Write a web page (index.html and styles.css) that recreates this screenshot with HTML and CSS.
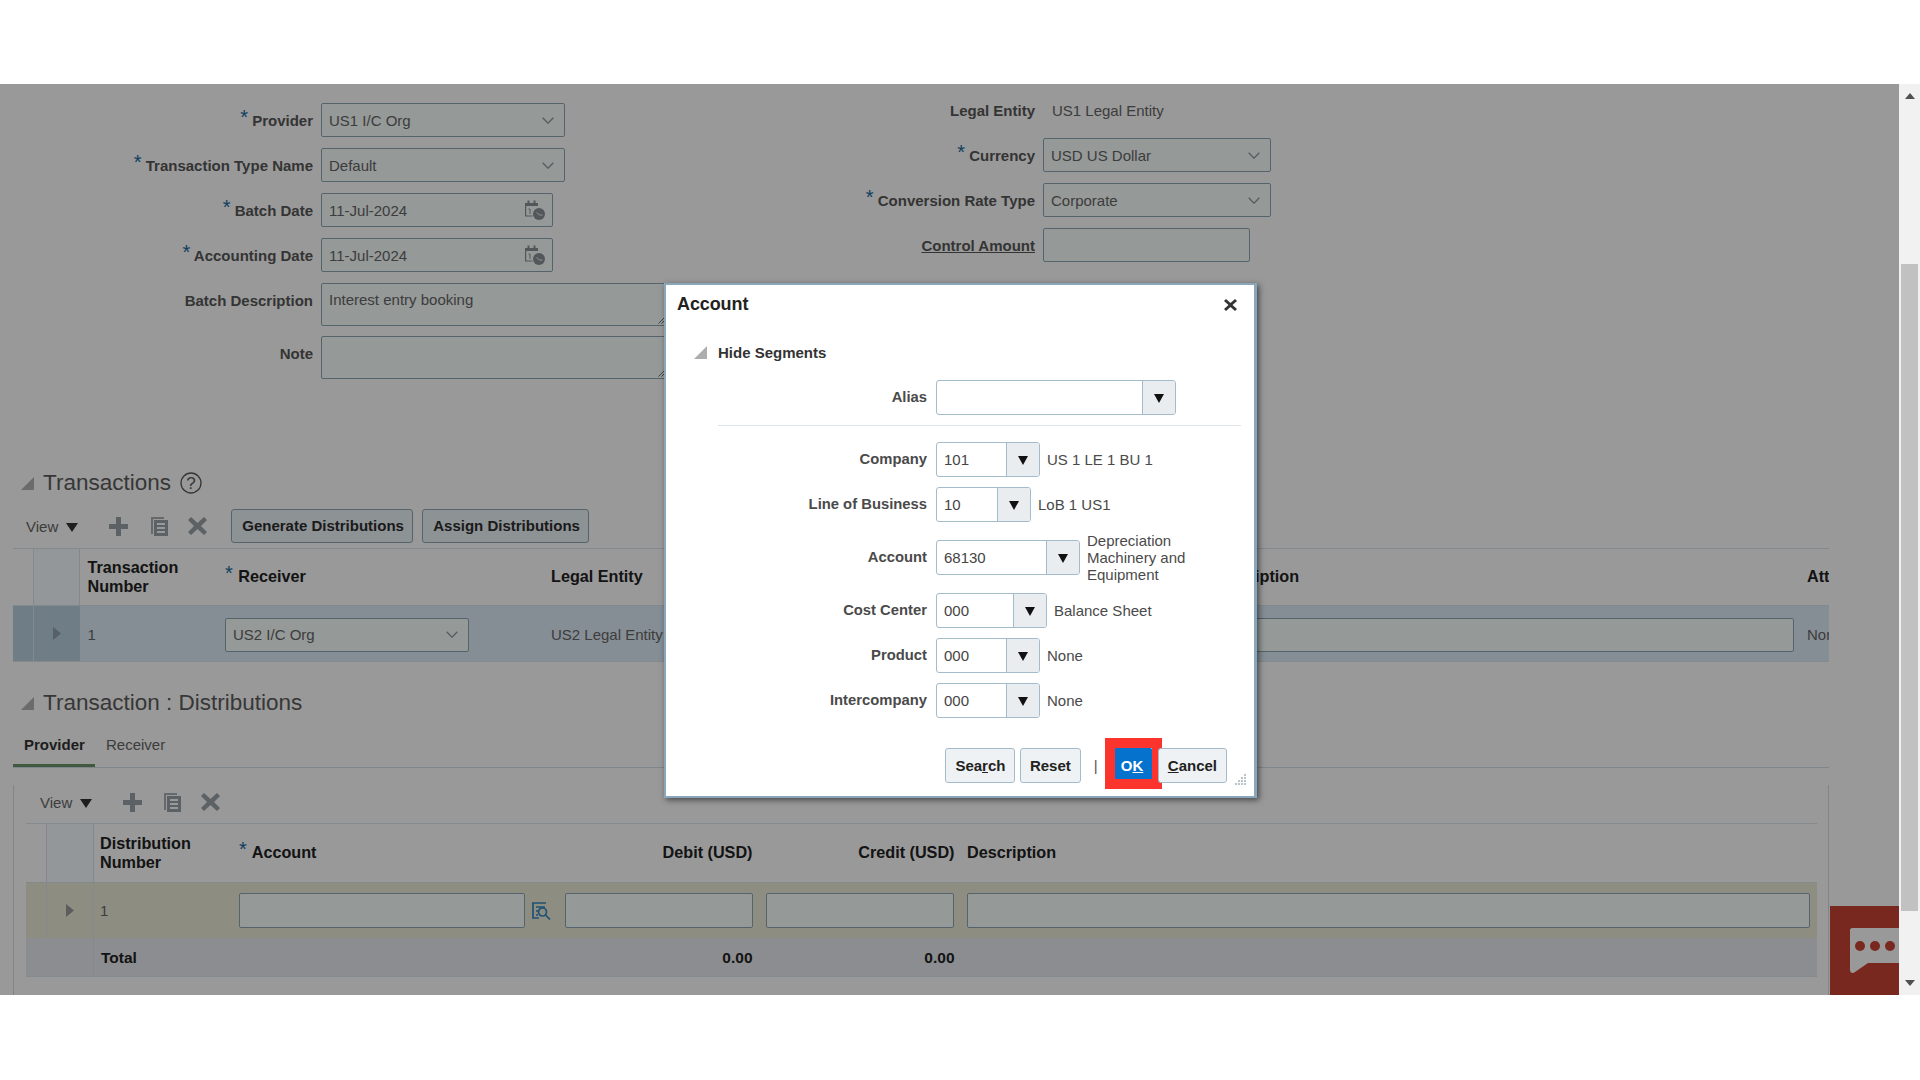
FILE: index.html
```html
<!DOCTYPE html>
<html lang="en">
<head>
<meta charset="utf-8">
<title>Account</title>
<link rel="stylesheet" href="styles.css">
</head>
<body>
<div class="topband"></div>
<div class="app">
  <div class="main">
    <div class="content">
      <div class="form">
        <div class="col-left">
          <div class="row"><label class="lbl"><span class="req">*</span> Provider</label><div class="input w244"><span>US1 I/C Org</span><svg class="chev" viewBox="0 0 12 7"><path d="M.7.7 6 6.2 11.3.7"/></svg></div></div>
          <div class="row"><label class="lbl"><span class="req">*</span> Transaction Type Name</label><div class="input w244"><span>Default</span><svg class="chev" viewBox="0 0 12 7"><path d="M.7.7 6 6.2 11.3.7"/></svg></div></div>
          <div class="row"><label class="lbl"><span class="req">*</span> Batch Date</label><div class="input w232"><span>11-Jul-2024</span><svg class="cal" viewBox="0 0 21 20"><path class="calbody" d="M1.600 4.500V16h7"/><path class="calfill" d="M1 3h13v3H1zM3.500 .5h2v3h-2zM9.500 .5h2v3h-2z"/><circle class="calfill" cx="15" cy="14" r="6"/><path class="calhand" d="M12.500 12.500l3 2.500h3"/><path class="calone" d="M4.500 9h1.500v5"/></svg></div></div>
          <div class="row"><label class="lbl"><span class="req">*</span> Accounting Date</label><div class="input w232"><span>11-Jul-2024</span><svg class="cal" viewBox="0 0 21 20"><path class="calbody" d="M1.600 4.500V16h7"/><path class="calfill" d="M1 3h13v3H1zM3.500 .5h2v3h-2zM9.500 .5h2v3h-2z"/><circle class="calfill" cx="15" cy="14" r="6"/><path class="calhand" d="M12.500 12.500l3 2.500h3"/><path class="calone" d="M4.500 9h1.500v5"/></svg></div></div>
          <div class="row tall"><label class="lbl">Batch Description</label><div class="input area"><span>Interest entry booking</span><svg class="rsz" viewBox="0 0 7 7"><path d="M.5 6.500 6.500.5M3.500 6.500l3-3"/></svg></div></div>
          <div class="row tall"><label class="lbl">Note</label><div class="input area"><svg class="rsz" viewBox="0 0 7 7"><path d="M.5 6.500 6.500.5M3.500 6.500l3-3"/></svg></div></div>
        </div>
        <div class="col-right">
          <div class="row"><label class="lbl r">Legal Entity</label><span class="val">US1 Legal Entity</span></div>
          <div class="row"><label class="lbl r"><span class="req">*</span> Currency</label><div class="input w228"><span>USD US Dollar</span><svg class="chev" viewBox="0 0 12 7"><path d="M.7.7 6 6.2 11.3.7"/></svg></div></div>
          <div class="row"><label class="lbl r"><span class="req">*</span> Conversion Rate Type</label><div class="input w228"><span>Corporate</span><svg class="chev" viewBox="0 0 12 7"><path d="M.7.7 6 6.2 11.3.7"/></svg></div></div>
          <div class="row"><label class="lbl r"><u>Control Amount</u></label><div class="input w207"></div></div>
        </div>
      </div>

      <div class="sechead">
        <svg class="tri" viewBox="0 0 13 13"><path d="M0 13h13V0z"/></svg>
        <h2>Transactions</h2>
        <svg class="help" viewBox="0 0 22 22"><circle cx="11" cy="11" r="10"/><text x="11" y="16.500" text-anchor="middle">?</text></svg>
      </div>
      <div class="wrap">
        <div class="toolbar">
          <span class="view">View</span><span class="vtri"></span>
          <svg class="ic plus" viewBox="0 0 19 19"><path d="M7 0h5v7h7v5h-7v7H7v-7H0V7h7z"/></svg>
          <svg class="ic doc" viewBox="0 0 17 19"><path class="back" d="M0 0h13v2H2v15H0z"/><path fill-rule="evenodd" d="M3 3h14v16H3zM6 6v2h8V6zm0 4v2h8v-2zm0 4v2h8v-2z"/></svg>
          <svg class="ic del" viewBox="0 0 19 18"><path d="M0 3 3 0l6.500 6L16 0l3 3-6 6 6 6-3 3-6.500-6L3 18l-3-3 6-6z"/></svg>
          <button class="tbtn first">Generate Distributions</button>
          <button class="tbtn second">Assign Distributions</button>
        </div>
        <div class="grid g1 head">
          <div class="c edge"></div>
          <div class="c rowh"></div>
          <div class="c">Transaction<br>Number</div>
          <div class="c"><span><span class="req">*</span> Receiver</span></div>
          <div class="c">Legal Entity</div>
          <div class="c">Description</div>
          <div class="c clip">Attachments</div>
        </div>
        <div class="grid g1 sel">
          <div class="c edge dark"></div>
          <div class="c rowh dark"><svg class="arrow" viewBox="0 0 8 13"><path d="M0 0l8 6.500L0 13z"/></svg></div>
          <div class="c val">1</div>
          <div class="c"><div class="input w244"><span>US2 I/C Org</span><svg class="chev" viewBox="0 0 12 7"><path d="M.7.7 6 6.2 11.3.7"/></svg></div></div>
          <div class="c val">US2 Legal Entity</div>
          <div class="c pr5"><div class="input wfill"></div></div>
          <div class="c clip val">None</div>
        </div>

        <div class="sechead second-head">
          <svg class="tri" viewBox="0 0 13 13"><path d="M0 13h13V0z"/></svg>
          <h2>Transaction : Distributions</h2>
        </div>
        <div class="tabs">
          <div class="tab on">Provider</div>
          <div class="tab">Receiver</div>
        </div>
        <div class="panel">
          <div class="toolbar t2">
            <span class="view">View</span><span class="vtri"></span>
            <svg class="ic plus" viewBox="0 0 19 19"><path d="M7 0h5v7h7v5h-7v7H7v-7H0V7h7z"/></svg>
            <svg class="ic doc" viewBox="0 0 17 19"><path class="back" d="M0 0h13v2H2v15H0z"/><path fill-rule="evenodd" d="M3 3h14v16H3zM6 6v2h8V6zm0 4v2h8v-2zm0 4v2h8v-2z"/></svg>
            <svg class="ic del" viewBox="0 0 19 18"><path d="M0 3 3 0l6.500 6L16 0l3 3-6 6 6 6-3 3-6.500-6L3 18l-3-3 6-6z"/></svg>
          </div>
          <div class="grid g2 head">
            <div class="c edge"></div>
            <div class="c rowh"></div>
            <div class="c p6">Distribution<br>Number</div>
            <div class="c"><span><span class="req">*</span> Account</span></div>
            <div class="c right">Debit (USD)</div>
            <div class="c right">Credit (USD)</div>
            <div class="c p5">Description</div>
          </div>
          <div class="grid g2 olive">
            <div class="c edge"></div>
            <div class="c rowh"><svg class="arrow" viewBox="0 0 8 13"><path d="M0 0l8 6.500L0 13z"/></svg></div>
            <div class="c val p6">1</div>
            <div class="c"><div class="input w286"></div>
              <svg class="lookup" viewBox="0 0 19 18"><path d="M0 1h14M1 1v15h6M4 5h9M4 9h2M4 13h2"/><circle cx="10.500" cy="10" r="4"/><path d="M13.500 13l4.500 4.500"/></svg>
            </div>
            <div class="c m6"><div class="input wdebit"></div></div>
            <div class="c m6"><div class="input wdebit"></div></div>
            <div class="c p5"><div class="input wfill"></div></div>
          </div>
          <div class="grid g2 total">
            <div class="c edge"></div>
            <div class="c rowh"></div>
            <div class="c p7">Total</div>
            <div class="c"></div>
            <div class="c right">0.00</div>
            <div class="c right">0.00</div>
            <div class="c"></div>
          </div>
        </div>
      </div>
      <div class="bottomline"></div>
    </div>

    <div class="chat">
      <svg viewBox="0 0 69 89"><path class="bubble" d="M22 22h47v35H38L25 66c-2 2-5 1-5-2V24c0-1 1-2 2-2z"/><circle cx="30" cy="40" r="5"/><circle cx="45" cy="40" r="5"/><circle cx="60" cy="40" r="5"/></svg>
    </div>
    <div class="overlay"></div>

    <div class="dialog">
      <div class="dhead"><span class="dtitle">Account</span><svg class="dclose" viewBox="0 0 13 12"><path d="M0 2 2 0l4.500 4L11 0l2 2-4.500 4L13 10l-2 2-4.500-4L2 12l-2-2 4.500-4z"/></svg></div>
      <div class="disc"><svg class="tri" viewBox="0 0 13 13"><path d="M0 13h13V0z"/></svg><span>Hide Segments</span></div>
      <div class="frow first"><span class="flbl">Alias</span><div class="combo f240"><span></span><i><b></b></i></div></div>
      <div class="sep"></div>
      <div class="frow"><span class="flbl">Company</span><div class="combo f104"><span>101</span><i><b></b></i></div><span class="fdesc">US 1 LE 1 BU 1</span></div>
      <div class="frow"><span class="flbl">Line of Business</span><div class="combo f95"><span>10</span><i><b></b></i></div><span class="fdesc">LoB 1 US1</span></div>
      <div class="frow"><span class="flbl">Account</span><div class="combo f144"><span>68130</span><i><b></b></i></div><span class="fdesc narrow">Depreciation Machinery and Equipment</span></div>
      <div class="frow"><span class="flbl">Cost Center</span><div class="combo f111"><span>000</span><i><b></b></i></div><span class="fdesc">Balance Sheet</span></div>
      <div class="frow"><span class="flbl">Product</span><div class="combo f104"><span>000</span><i><b></b></i></div><span class="fdesc">None</span></div>
      <div class="frow"><span class="flbl">Intercompany</span><div class="combo f104"><span>000</span><i><b></b></i></div><span class="fdesc">None</span></div>
      <div class="actions">
        <button class="dbtn">Sea<u>r</u>ch</button>
        <button class="dbtn">Reset</button>
        <span class="pipe">|</span>
        <button class="dbtn ok">O<u>K</u><span class="mark"></span></button>
        <button class="dbtn"><u>C</u>ancel</button>
      </div>
      <svg class="grip" viewBox="0 0 12 12"><path d="M10 0h2v2h-2zM7 3h2v2H7zM10 3h2v2h-2zM4 6h2v2H4zM7 6h2v2H7zM10 6h2v2h-2zM1 9h2v2H1zM4 9h2v2H4zM7 9h2v2H7zM10 9h2v2h-2z"/></svg>
    </div>
  </div>
  <div class="scrollbar">
    <div class="sbarrow"><svg viewBox="0 0 10 6"><path d="M5 0l5 6H0z"/></svg></div>
    <div class="thumb"></div>
    <div class="sbarrow down"><svg viewBox="0 0 10 6"><path d="M0 0h10L5 6z"/></svg></div>
  </div>
</div>
</body>
</html>
```
FILE: styles.css
```css
* { box-sizing: border-box; }
html, body { margin: 0; padding: 0; }
body {
  width: 1920px; height: 1080px; overflow: hidden; background: #fff;
  font: 15px/17px "Liberation Sans", Arial, sans-serif; color: #666;
}
u { text-decoration: underline; }
.topband { height: 84px; }
.app { display: flex; height: 911px; }
.main { flex: 1; position: relative; overflow: hidden; background: #fff; }
.content { height: 911px; }

/* form */
.form { display: flex; height: 386px; padding-top: 9px; }
.col-left { width: 700px; padding-top: 10px; }
.row { display: flex; align-items: center; height: 34px; margin-bottom: 11px; }
.row.tall { height: 43px; margin-bottom: 10px; align-items: flex-start; }
.row.tall .lbl { line-height: 36px; }
.lbl { width: 313px; margin-right: 8px; text-align: right; font-weight: 700; font-size: 15px; color: #585858; white-space: nowrap; flex: none; }
.lbl.r { width: 335px; }
.req { color: #1a6a9e; font-weight: 400; font-size: 20px; line-height: 0; position: relative; top: -2px; }
.val { color: #666; }
.col-right .val { margin-left: 1px; padding-left: 8px; }
.input {
  display: flex; align-items: center; justify-content: space-between; flex: none;
  height: 34px; padding: 0 10px 0 7px; background: #f8fffd;
  border: 1px solid #8ea7b4; border-radius: 2px; color: #666; white-space: nowrap;
}
.w244 { width: 244px; }
.w232 { width: 232px; }
.w228 { width: 228px; }
.w207 { width: 207px; }
.w286 { width: 286px; }
.wdebit { width: 188px; }
.wfill { width: 100%; }
.area { position: relative; width: 345px; height: 43px; align-items: flex-start; padding-top: 7px; }
.rsz { position: absolute; right: 0; bottom: 1px; width: 7px; height: 7px; fill: none; stroke: #6e6e6e; stroke-width: 1; }
.chev { width: 12px; height: 7px; }
.chev path { fill: none; stroke: #8f9aa1; stroke-width: 1.300; }
.cal { width: 21px; height: 20px; margin-right: -3px; margin-top: -1px; }
.calbody { fill: none; stroke: #8a9297; stroke-width: 1.200; }
.calfill { fill: #8a9297; }
.calhand { fill: none; stroke: #eef2f4; stroke-width: 1; }
.calone { fill: none; stroke: #8a9297; stroke-width: 1; }

/* section heads */
.sechead { display: flex; align-items: center; height: 26px; padding-left: 21px; }
.sechead .tri { width: 13px; height: 13px; margin-right: 9px; fill: #b2b2b2; }
h2 { margin: 0; font-weight: 400; font-size: 22.500px; line-height: 26px; color: #5c5c5c; }
.help { width: 22px; height: 22px; margin-left: 9px; }
.help circle { fill: none; stroke: #5a5a5a; stroke-width: 1.300; }
.help text { font-size: 17px; fill: #5a5a5a; font-family: "Liberation Sans", Arial, sans-serif; }
.second-head { margin-top: 28px; padding-left: 8px; }

/* toolbars */
.wrap { width: 1816px; margin-left: 13px; }
.toolbar { display: flex; align-items: center; height: 34px; margin-top: 13px; padding-left: 13px; }
.view { color: #666; }
.vtri { width: 0; height: 0; margin-left: 8px; border-left: 6px solid transparent; border-right: 6px solid transparent; border-top: 9px solid #333; margin-right: 31px; margin-top: 2px; }
.ic { fill: #9aa2a8; flex: none; }
.ic .back { fill: #a9afb3; }
.plus { width: 19px; height: 19px; }
.doc { width: 17px; height: 19px; margin-left: 22.500px; }
.del { width: 19px; height: 18px; margin-left: 20px; }
.t2 .doc { margin-left: 22px; }
.tbtn {
  height: 34px; padding: 0 10px 2px; font: 700 15px "Liberation Sans", Arial, sans-serif; color: #2e2e2e;
  background: #ecf3f8; border: 1px solid #8ea7b4; border-radius: 3px; white-space: nowrap;
}
.tbtn.first { margin-left: 24.500px; width: 181.500px; }
.tbtn.second { margin-left: 9.500px; width: 167px; }

/* tables */
.grid { display: grid; }
.g1 { grid-template-columns: 20px 46.500px 137.500px 326px 659px 597px 30px; }
.wrap > .g1.head { margin-top: 5px; }
.g2 { grid-template-columns: 20px 48px 137px 328px 201px 202px 855px; }
.c { display: flex; align-items: center; padding-left: 8px; white-space: nowrap; overflow: hidden; }
.head { height: 58px; border-top: 1px solid #dce5eb; border-bottom: 1px solid #dce5eb; font-weight: 700; font-size: 16.200px; line-height: 19.500px; color: #222; }
.head .req { font-size: 20px; margin-right: 1px; }
.head .rowh { background: #f5fcff; border-left: 1px solid #dce5eb; border-right: 1px solid #dce5eb; }
.edge, .rowh { padding: 0; justify-content: center; }
.sel { height: 56px; background: #e0edf9; border-bottom: 1px solid #dce5eb; }
.sel .c { padding-top: 2px; }
.sel .c.dark { padding-top: 0; background: #b9d0df; }
.sel .rowh { border-left: 1px solid #dce5eb; }
.clip { padding-left: 8px; }
.arrow { width: 8px; height: 13px; fill: #999; }
.sel .arrow { fill: #8fa0ac; }
.pr5 { padding-right: 5px; }
.p6 { padding-left: 6px; }
.p7 { padding-left: 7px; }
.p5 { padding-left: 5px; padding-right: 7px; }
.m6 { padding-left: 6px; }
.right { justify-content: flex-end; padding-right: 7.500px; }

.tabs { display: flex; align-items: flex-end; height: 52px; border-bottom: 1px solid #d3dfe9; }
.tab { height: 41px; padding: 10px 11px 0; font-size: 15px; color: #666; border-bottom: 3px solid transparent; }
.tab.on { width: 82px; font-weight: 700; color: #333; border-bottom-color: #6d9468; }

.panel { height: 222px; padding: 0 11px 0 12px; border: 1px solid #d3dfe9; border-top: 0; border-radius: 0 0 3px 3px; }
.toolbar.t2 { margin-top: 17px; padding-left: 14px; }
.t2 + .grid { margin-top: 4px; }
.g2.head { height: 60px; }
.olive { height: 55px; background: #ecebd8; }
.olive .rowh { border-left: 1px solid #dce5eb; border-right: 1px solid #dce5eb; }
.olive .input { background: #f8fffd; height: 35px; }
.lookup { width: 19px; height: 18px; margin-left: 7px; flex: none; fill: none; stroke: #3488c4; stroke-width: 1.700; }
.total { height: 39px; background: #e9ecf0; border-bottom: 1px solid #dce5eb; font-weight: 700; font-size: 15.500px; color: #222; }
.total .rowh { border-right: 1px solid #dce5eb; }
.bottomline { height: 2px; margin-top: 3px; background: #3a6c6c; }

/* chat + overlay */
.chat { position: absolute; left: 1830px; top: 822px; width: 69px; height: 89px; background: #c84334; }
.chat svg { display: block; width: 69px; height: 89px; fill: #c84334; }
.chat .bubble { fill: #fff; }
.overlay { position: absolute; inset: 0; background: rgba(0,0,0,.4); }

/* dialog */
.dialog {
  position: absolute; left: 664px; top: 199px; width: 593px; height: 515px; padding-left: 1px;
  background: #fff; border: 2px solid #8aa6bb; border-right-width: 3px; box-shadow: 2px 2px 6px rgba(0,0,0,.55);
  color: #444;
}
.dhead { display: flex; align-items: center; justify-content: space-between; height: 36px; padding: 2px 17.500px 0 10px; }
.dtitle { font-size: 18px; font-weight: 700; color: #222; letter-spacing: -.1px; }
.dclose { width: 13px; height: 12px; margin-top: 2px; fill: #333; }
.disc { display: flex; align-items: center; height: 25px; margin-top: 19px; padding-left: 27px; font-weight: 700; color: #333; }
.disc .tri { width: 13px; height: 13px; margin-right: 11px; fill: #adadad; }
.frow { display: flex; align-items: center; margin-top: 10px; }
.frow.first { margin-top: 15px; }
.flbl { width: 260px; margin-right: 9px; text-align: right; font-weight: 700; font-size: 14.800px; color: #4a4a4a; white-space: nowrap; flex: none; }
.combo { display: flex; flex: none; height: 35px; border: 1px solid #a4bbcb; border-radius: 3px; overflow: hidden; background: #fff; color: #444; }
.combo span { flex: 1; padding-left: 7px; line-height: 33px; }
.combo i { display: flex; align-items: center; justify-content: center; width: 33px; background: #e9edf0; border-left: 1px solid #a4bbcb; }
.combo b { width: 0; height: 0; margin-top: 2px; border-left: 5.500px solid transparent; border-right: 5.500px solid transparent; border-top: 9px solid #111; }
.f240 { width: 240px; }
.f104 { width: 104px; }
.f95 { width: 95px; }
.f144 { width: 144px; }
.f111 { width: 111px; }
.fdesc { margin-left: 7px; color: #4a4a4a; }
.fdesc.narrow { width: 115px; line-height: 17px; }
.sep { height: 1px; margin: 10px 13px 16px 51px; background: #dde5ea; }
.actions { display: flex; align-items: flex-start; justify-content: flex-end; margin-top: 30px; padding-right: 27px; }
.dbtn {
  position: relative; height: 35px; padding: 0 9px; margin-left: 4.500px; white-space: nowrap;
  font: 700 15px "Liberation Sans", Arial, sans-serif; color: #222;
  background: #eff2f4; border: 1px solid #a4bbcb; border-radius: 3px;
}
.pipe { width: 30px; padding-left: 13px; line-height: 35px; color: #555; }
.dbtn.ok { background: #0572ce; color: #fff; border-color: #0572ce; width: 42.500px; margin-left: 0; }
.mark { position: absolute; left: -6.500px; top: -11px; width: 57px; height: 51px; border: 10px solid #fb352d; }
.grip { position: absolute; right: 8px; bottom: 10px; width: 12px; height: 12px; fill: #b9c4cb; }

/* scrollbar */
.scrollbar { display: flex; flex-direction: column; align-items: center; width: 21px; background: #f1f1f1; }
.sbarrow { display: flex; align-items: center; justify-content: center; width: 100%; height: 24px; }
.sbarrow svg { width: 10px; height: 6px; fill: #505050; }
.sbarrow.down { margin-top: auto; }
.thumb { width: 17px; height: 647px; margin-top: 156px; background: #c1c1c1; }
```
